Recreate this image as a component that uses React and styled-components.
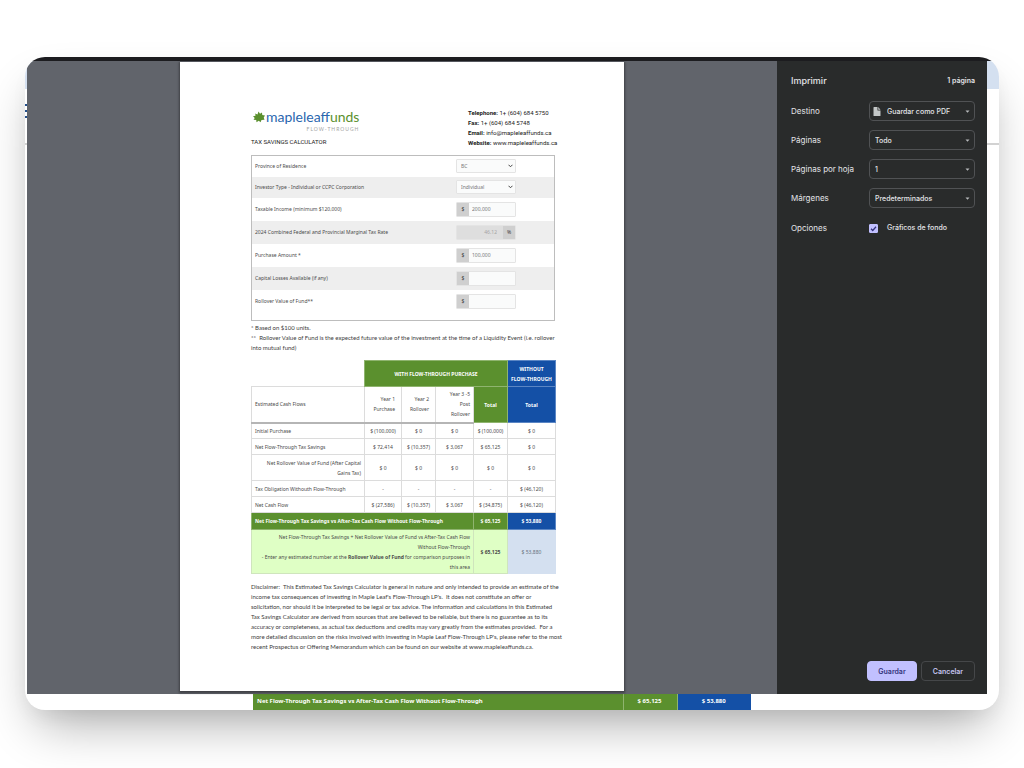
import React, { useState } from "react"
import styled, { createGlobalStyle } from "styled-components"

const colours = {
  green: "#5b902e",
  blue: "#1450a6",
  paleGreen: "#dfffc5",
  paleBlue: "#d4e0f0",
  stripe: "#eeeeee",
  line: "#dcdcdc",
  inputLine: "#e4e4e4",
  ink: "#4a4a4a",
  dark: "#292b2b",
  preview: "#61646b",
  lilac: "#c1c0ff"
}

const fonts = {
  ui: `Inter, "Open Sans", sans-serif`,
  heading: `Roboto, "Liberation Sans", sans-serif`,
  copy: `Lato, Roboto, sans-serif`,
  table: `"Noto Sans", "Open Sans", sans-serif`
}

const GlobalStyle = createGlobalStyle`
  *, *::before, *::after {
    box-sizing: border-box;
  }
  body {
    margin: 0;
    background: white;
    font-family: ${fonts.ui};
  }
  h1, h2, p, address {
    margin: 0;
    font-style: normal;
  }
`

const Stage = styled.div`
  padding: 57px 25px 58px;
  overflow: hidden;
`

const BrowserWindow = styled.div`
  display: grid;
  grid-template-rows: 4px auto;
  overflow: hidden;
  border-radius: 20px;
  background: white;
  box-shadow: 0 25px 50px -12px rgba(0, 0, 0, 0.33), 0 10px 20px -4px rgba(0, 0, 0, 0.05);
`

const TopBar = styled.div`
  background: #1c1c1f;
`

/* page under the print dialog */

const Page = styled.div`
  grid-area: 2 / 1;
  display: flex;
  flex-direction: column;
`

const Banner = styled.div`
  height: 28px;
  background: ${colours.paleBlue};
`

const Nav = styled.nav`
  display: flex;
  align-items: flex-start;
  height: 56px;
  padding-top: 13px;
  border-bottom: 2px solid #d2d2d2;
`

const ResultTable = styled.table`
  margin: auto 248px 0 228px;
  border-collapse: collapse;
  table-layout: fixed;
  font-family: ${fonts.table};
  font-size: 6px;
  font-weight: 700;
  line-height: 10px;
  color: white;
`

const ResultCell = styled.td`
  width: ${props => props.width || "auto"};
  height: 18px;
  padding: 0 4px 0 3px;
  text-align: ${props => props.align || "center"};
  background: ${props => props.$blue ? colours.blue : colours.green};
  border-left: 1px solid ${props => props.align ? colours.green : "#8fb46f"};
`

/* print dialog */

const Dialog = styled.section`
  grid-area: 2 / 1;
  display: flex;
  margin: 0 12px 16px 2px;
  background: ${colours.preview};
`

const Preview = styled.div`
  flex: 1;
  display: flex;
  justify-content: center;
  padding: 1px 0 3px;
`

const Sheet = styled.article`
  width: 444px;
  padding: 46px 69px 39px 71px;
  background: white;
  box-shadow: 0 1px 2px 1px rgba(40, 40, 44, 0.6);
`

const Panel = styled.aside`
  width: 210px;
  display: flex;
  flex-direction: column;
  padding: 12px 12px 13px 14px;
  background: ${colours.dark};
  color: #e4e4e8;
`

const PanelHeader = styled.header`
  display: flex;
  justify-content: space-between;
  align-items: center;
  height: 14px;
  margin-bottom: 14px;
`

const PanelTitle = styled.h1`
  font-size: 9px;
  font-weight: 500;
`

const PageCount = styled.span`
  font-size: 7px;
  font-weight: 600;
`

const Settings = styled.form`
  display: flex;
  flex-direction: column;
  gap: 9px;
`

const Setting = styled.div`
  display: grid;
  grid-template-columns: 1fr 106px;
  align-items: center;
  min-height: 20px;
`

const SettingLabel = styled.label`
  font-size: ${props => props.$small ? "7px" : "8px"};
  line-height: 12px;
  font-weight: ${props => props.$small ? 500 : 400};
  white-space: nowrap;
`

const SelectBox = styled.div`
  display: grid;
  align-items: center;
  > * {
    grid-area: 1 / 1;
  }
  > svg {
    pointer-events: none;
  }
`

const PanelSelect = styled.select`
  appearance: none;
  width: 100%;
  height: 20px;
  padding: 1px 14px 0 ${props => props.$icon ? "17px" : "5px"};
  border: 1px solid #505254;
  border-radius: 4px;
  background: transparent;
  color: #e4e4e8;
  font-family: ${fonts.ui};
  font-size: 7px;
  font-weight: 500;
`

const Caret = styled.svg`
  justify-self: end;
  width: 5px;
  height: 3px;
  margin-right: 5px;
`

const FileIcon = styled.svg`
  width: 8px;
  height: 9px;
  margin-left: 4px;
`

const CheckRow = styled.div`
  display: grid;
  grid-template-columns: 9px 1fr;
  align-items: center;
  gap: 9px;
  height: 22px;
`

const Checkbox = styled.input`
  appearance: none;
  grid-area: 1 / 1;
  width: 9px;
  height: 9px;
  margin: 0;
  border: 1px solid ${colours.lilac};
  border-radius: 1px;
  &:checked {
    background: ${colours.lilac};
  }
`

const Tick = styled.svg`
  grid-area: 1 / 1;
  width: 9px;
  height: 9px;
  pointer-events: none;
`

const Actions = styled.footer`
  display: flex;
  justify-content: flex-end;
  gap: 4px;
  margin-top: auto;
`

const Button = styled.button`
  width: ${props => props.$primary ? "50px" : "54px"};
  height: 20px;
  padding: 0;
  border: 1px solid ${props => props.$primary ? colours.lilac : "#454749"};
  border-radius: 4px;
  background: ${props => props.$primary ? colours.lilac : "transparent"};
  color: ${props => props.$primary ? "#34337c" : "#c6c5f0"};
  font-family: ${fonts.ui};
  font-size: 7px;
  font-weight: 600;
`

/* printed sheet */

const Letterhead = styled.header`
  display: flex;
  justify-content: space-between;
  margin-bottom: 7px;
`

const Logo = styled.div`
  display: grid;
  grid-template-columns: 13px auto;
  align-items: center;
  padding-left: 2px;
  font-family: ${fonts.copy};
`

const LeafIcon = styled.svg`
  width: 12px;
  height: 12px;
`

const LogoName = styled.div`
  font-size: 14px;
  line-height: 17px;
  color: #2a66ae;
  span {
    color: ${colours.green};
  }
`

const LogoTag = styled.div`
  grid-column: 1 / 3;
  justify-self: end;
  font-size: 5px;
  line-height: 8px;
  letter-spacing: 1px;
  color: #a3a3a3;
`

const SheetTitle = styled.h2`
  margin-top: 5px;
  font-family: ${fonts.heading};
  font-size: 6px;
  font-weight: 400;
  line-height: 8px;
  color: #222;
`

const Contact = styled.address`
  width: 87px;
  font-family: ${fonts.heading};
  font-size: 6px;
  line-height: 10px;
  white-space: nowrap;
  color: #222;
  a {
    color: inherit;
    text-decoration: none;
  }
`

const Calculator = styled.form`
  padding-bottom: 7px;
  border: 1px solid #bdbdbd;
  font-family: ${fonts.table};
  font-size: 5px;
  color: ${colours.ink};
`

const Field = styled.div`
  display: grid;
  grid-template-columns: 1fr 60px 38px;
  align-items: center;
  height: ${props => props.$short ? "21px" : "23px"};
  padding: 0 0 1px 3px;
  &:nth-child(even) {
    background: ${colours.stripe};
  }
`

const FieldSelect = styled.select`
  appearance: none;
  width: 100%;
  height: 14px;
  padding: 0 12px 0 4px;
  border: 1px solid ${colours.inputLine};
  border-radius: 1px;
  background: #fafbfb;
  color: #777;
  font-family: ${fonts.table};
  font-size: 5px;
`

const Chevron = styled.svg`
  justify-self: end;
  width: 5px;
  height: 4px;
  margin-right: 3px;
`

const InputGroup = styled.div`
  display: flex;
  height: 15px;
  border: 1px solid ${colours.inputLine};
  border-radius: 1px;
`

const Affix = styled.span`
  width: 12px;
  line-height: 13px;
  text-align: center;
  background: #cfcfcf;
  color: #333;
`

const FieldInput = styled.input`
  flex: 1;
  min-width: 0;
  padding: 0 3px;
  border: 0;
  background: #fafbfb;
  color: #777;
  font-family: ${fonts.table};
  font-size: 5px;
  &:disabled {
    padding-right: 6px;
    text-align: right;
    background: #dedede;
    color: #a5a5a5;
  }
`

const Copy = styled.p`
  margin-top: ${props => props.$gap || "0"};
  font-family: ${fonts.copy};
  font-size: 6px;
  line-height: 10px;
  white-space: pre;
  color: #3c3c3c;
`

const CashTable = styled.table`
  width: 100%;
  margin-top: 7px;
  border-collapse: collapse;
  table-layout: fixed;
  font-family: ${fonts.table};
  font-size: 5px;
  line-height: 10px;
  color: ${colours.ink};
`

const tones = {
  plain: { background: "white", color: colours.ink, line: colours.line },
  green: { background: colours.green, color: "white", line: "#8fb46f" },
  blue: { background: colours.blue, color: "white", line: "#5b86c4" },
  paleGreen: { background: colours.paleGreen, color: colours.ink, line: "#cfe5bd" },
  paleBlue: { background: colours.paleBlue, color: "#66707c", line: colours.paleBlue }
}

const Row = styled.tr`
  height: ${props => props.$height};
`

const Cell = styled.td`
  padding: 0 ${props => props.$inset || "3px"} 0 3px;
  border: 1px solid ${props => tones[props.$tone || "plain"].line};
  border-bottom-width: ${props => props.$rule ? "2px" : "1px"};
  border-bottom-color: ${props => props.$rule ? "#b5b5b5" : tones[props.$tone || "plain"].line};
  background: ${props => tones[props.$tone || "plain"].background};
  color: ${props => tones[props.$tone || "plain"].color};
  font-weight: ${props => props.$bold ? 700 : 400};
  text-align: ${props => props.$align || "center"};
  white-space: nowrap;
`

const Blank = styled.td`
  padding: 0;
`

const LabelColumn = styled.col`
  width: 113px;
`

const YearColumn = styled.col`
  width: ${props => props.$width};
`

const settings = [
  { id: "destino", label: "Destino", value: "Guardar como PDF", icon: true },
  { id: "paginas", label: "Páginas", value: "Todo" },
  { id: "hoja", label: "Páginas por hoja", value: "1" },
  { id: "margenes", label: "Márgenes", value: "Predeterminados" }
]

const fields = [
  { id: "province", label: "Province of Residence", type: "select", value: "BC" },
  { id: "investor", label: "Investor Type - Individual or CCPC Corporation", type: "select", value: "Individual" },
  { id: "income", label: "Taxable Income (minimum $120,000)", value: "200,000" },
  { id: "rate", label: "2024 Combined Federal and Provincial Marginal Tax Rate", type: "rate", value: "46.12" },
  { id: "purchase", label: "Purchase Amount *", value: "100,000" },
  { id: "losses", label: "Capital Losses Available (if any)", value: "" },
  { id: "rollover", label: "Rollover Value of Fund**", value: "" }
]

const cashFlows = [
  { label: "Initial Purchase", values: ["$ (100,000)", "$ 0", "$ 0", "$ (100,000)", "$ 0"] },
  { label: "Net Flow-Through Tax Savings", values: ["$ 72,414", "$ (10,357)", "$ 3,067", "$ 65,125", "$ 0"] },
  {
    label: <>Net Rollover Value of Fund (After Capital<br />Gains Tax)</>,
    tall: true,
    values: ["$ 0", "$ 0", "$ 0", "$ 0", "$ 0"]
  },
  { label: "Tax Obligation Withouth Flow-Through", values: ["-", "-", "-", "-", "$ (46,120)"] },
  { label: "Net Cash Flow", values: ["$ (27,586)", "$ (10,357)", "$ 3,067", "$ (34,875)", "$ (46,120)"] }
]

const notes = `* Based on $100 units.
**  Rollover Value of Fund is the expected future value of the investment at the time of a Liquidity Event (i.e. rollover
into mutual fund)`

const disclaimer = `Disclaimer:  This Estimated Tax Savings Calculator is general in nature and only intended to provide an estimate of the
income tax consequences of investing in Maple Leaf's Flow-Through LP's.  It does not constitute an offer or
solicitation, nor should it be interpreted to be legal or tax advice. The information and calculations in this Estimated
Tax Savings Calculator are derived from sources that are believed to be reliable, but there is no guarantee as to its
accuracy or completeness, as actual tax deductions and credits may vary greatly from the estimates provided.  For a
more detailed discussion on the risks involved with investing in Maple Leaf Flow-Through LP's, please refer to the most
recent Prospectus or Offering Memorandum which can be found on our website at www.mapleleaffunds.ca.`

const CalculatorField = ({ field }) => {
  const { id, label, type, value } = field

  return (
    <Field $short={type === "select"}>
      <label htmlFor={id}>{label}</label>
      {type === "select" ? (
        <SelectBox>
          <FieldSelect id={id} defaultValue={value}>
            <option>{value}</option>
          </FieldSelect>
          <Chevron viewBox="0 0 10 8" fill="none" stroke="#444" strokeWidth="2">
            <path d="M1 1.5l4 4 4-4" />
          </Chevron>
        </SelectBox>
      ) : (
        <InputGroup>
          {type !== "rate" && <Affix>$</Affix>}
          <FieldInput id={id} defaultValue={value} disabled={type === "rate"} />
          {type === "rate" && <Affix>%</Affix>}
        </InputGroup>
      )}
    </Field>
  )
}

const CashFlows = () => (
  <CashTable>
    <colgroup>
      <LabelColumn />
      {["37px", "34px", "38px", "34px", "48px"].map((width, i) => <YearColumn key={i} $width={width} />)}
    </colgroup>
    <tbody>
      <Row $height="26px">
        <Blank />
        <Cell as="th" colSpan={4} $tone="green" $bold>WITH FLOW-THROUGH PURCHASE</Cell>
        <Cell as="th" $tone="blue" $bold>WITHOUT<br />FLOW-THROUGH</Cell>
      </Row>
      <Row $height="36px">
        <Cell $align="left" $rule>Estimated Cash Flows</Cell>
        <Cell $align="right" $inset="6px" $rule>Year 1<br />Purchase</Cell>
        <Cell $align="right" $inset="6px" $rule>Year 2<br />Rollover</Cell>
        <Cell $align="right" $rule>Year 3 -5<br />Post<br />Rollover</Cell>
        <Cell as="th" $tone="green" $bold>Total</Cell>
        <Cell as="th" $tone="blue" $bold>Total</Cell>
      </Row>
      {cashFlows.map((flow, i) => (
        <Row key={i} $height={flow.tall ? "26px" : "16px"}>
          <Cell $align={flow.tall ? "right" : "left"}>{flow.label}</Cell>
          {flow.values.map((value, j) => <Cell key={j}>{value}</Cell>)}
        </Row>
      ))}
      <Row $height="17px">
        <Cell colSpan={4} $tone="green" $align="left" $bold>
          Net Flow-Through Tax Savings vs After-Tax Cash Flow Without Flow-Through
        </Cell>
        <Cell $tone="green" $bold>$ 65,125</Cell>
        <Cell $tone="blue" $bold>$ 53,880</Cell>
      </Row>
      <Row $height="44px">
        <Cell colSpan={4} $tone="paleGreen" $align="right">
          Net Flow-Through Tax Savings + Net Rollover Value of Fund vs After-Tax Cash Flow<br />
          Without Flow-Through<br />
          - Enter any estimated number at the <b>Rollover Value of Fund</b> for comparison purposes in<br />
          this area
        </Cell>
        <Cell $tone="paleGreen" $bold>$ 65,125</Cell>
        <Cell $tone="paleBlue">$ 53,880</Cell>
      </Row>
    </tbody>
  </CashTable>
)

const PrintedSheet = () => (
  <Sheet>
    <Letterhead>
      <div>
        <Logo>
          <LeafIcon viewBox="0 0 24 24" fill={colours.green}>
            <path d="M11 1l3 4.500 4-2.500.5 5L24 9l-2.500 4 1.500 4.500-6 .5-2 4.500-3.500-3L7 22.500 6.500 18 1 17.500 3.500 14 0 10.500l5-1L4.500 5 9 7z" />
          </LeafIcon>
          <LogoName>mapleleaf<span>funds</span></LogoName>
          <LogoTag>FLOW-THROUGH</LogoTag>
        </Logo>
        <SheetTitle>TAX SAVINGS CALCULATOR</SheetTitle>
      </div>
      <Contact>
        <b>Telephone:</b> 1+ (604) 684 5750<br />
        <b>Fax:</b> 1+ (604) 684 5748<br />
        <b>Email:</b> <a href="mailto:info@mapleleaffunds.ca">info@mapleleaffunds.ca</a><br />
        <b>Website:</b> <a href="#website">www.mapleleaffunds.ca</a>
      </Contact>
    </Letterhead>
    <Calculator>
      {fields.map(field => <CalculatorField key={field.id} field={field} />)}
    </Calculator>
    <Copy $gap="2px">{notes}</Copy>
    <CashFlows />
    <Copy $gap="8px">{disclaimer}</Copy>
  </Sheet>
)

const PrintPanel = () => {
  const [graphics, setGraphics] = useState(true)

  return (
    <Panel>
      <PanelHeader>
        <PanelTitle>Imprimir</PanelTitle>
        <PageCount>1 página</PageCount>
      </PanelHeader>
      <Settings>
        {settings.map(({ id, label, value, icon }) => (
          <Setting key={id}>
            <SettingLabel htmlFor={id}>{label}</SettingLabel>
            <SelectBox>
              <PanelSelect id={id} defaultValue={value} $icon={icon}>
                <option>{value}</option>
              </PanelSelect>
              {icon && (
                <FileIcon viewBox="0 0 16 18" fill="#c3c7c7">
                  <path d="M2 0h7v7h6v10a1 1 0 0 1-1 1H2a1 1 0 0 1-1-1V1a1 1 0 0 1 1-1zM10.500 0L15 5.500h-4.500z" />
                </FileIcon>
              )}
              <Caret viewBox="0 0 10 6" fill="#b8babc">
                <path d="M1 1h8L5 5.500z" />
              </Caret>
            </SelectBox>
          </Setting>
        ))}
        <Setting>
          <SettingLabel as="span">Opciones</SettingLabel>
          <CheckRow>
            <Checkbox
              id="fondo"
              type="checkbox"
              checked={graphics}
              onChange={e => setGraphics(e.target.checked)}
            />
            {graphics && (
              <Tick viewBox="0 0 18 18" fill="none" stroke="#34337c" strokeWidth="2.500">
                <path d="M4 9.500l3.500 3.500L14 5.500" />
              </Tick>
            )}
            <SettingLabel htmlFor="fondo" $small>Gráficos de fondo</SettingLabel>
          </CheckRow>
        </Setting>
      </Settings>
      <Actions>
        <Button type="button" $primary>Guardar</Button>
        <Button type="button">Cancelar</Button>
      </Actions>
    </Panel>
  )
}

const App = () => (
  <>
    <GlobalStyle />
    <Stage>
      <BrowserWindow>
        <TopBar />
        <Page>
          <Banner />
          <Nav>
            <svg width="16" height="18" stroke="#24508c" strokeWidth="2">
              <path d="M0 3h16M0 9h16M0 15h16" />
            </svg>
          </Nav>
          <ResultTable>
            <tbody>
              <tr>
                <ResultCell align="left">
                  Net Flow-Through Tax Savings vs After-Tax Cash Flow Without Flow-Through
                </ResultCell>
                <ResultCell width="54px">$ 65,125</ResultCell>
                <ResultCell width="74px" $blue>$ 53,880</ResultCell>
              </tr>
            </tbody>
          </ResultTable>
        </Page>
        <Dialog role="dialog" aria-label="Imprimir">
          <Preview>
            <PrintedSheet />
          </Preview>
          <PrintPanel />
        </Dialog>
      </BrowserWindow>
    </Stage>
  </>
)

export default App
